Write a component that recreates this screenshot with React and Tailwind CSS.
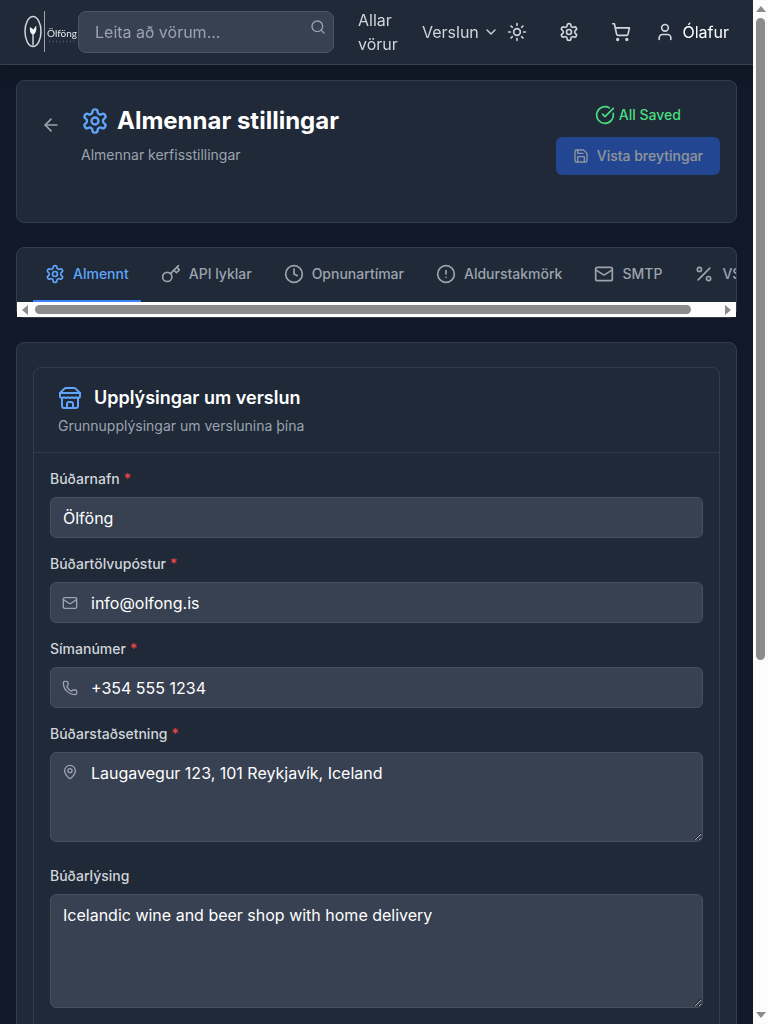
import React from "react";
import {
  ArrowLeft,
  ChevronDown,
  CircleAlert,
  CircleCheckBig,
  Clock,
  Mail,
  MapPin,
  Percent,
  Phone,
  Save,
  Search,
  ShoppingCart,
  Sun,
  User,
} from "lucide-react";

function StrokeIcon({ size, className, children }) {
  return (
    <svg
      width={size}
      height={size}
      viewBox="0 0 24 24"
      fill="none"
      stroke="currentColor"
      strokeWidth="2"
      strokeLinecap="round"
      strokeLinejoin="round"
      aria-hidden="true"
      className={className}
    >
      {children}
    </svg>
  );
}

function GearIcon(props) {
  return (
    <StrokeIcon {...props}>
      <path d="M12.22 2h-.44a2 2 0 0 0-2 2v.18a2 2 0 0 1-1 1.73l-.43.25a2 2 0 0 1-2 0l-.15-.08a2 2 0 0 0-2.73.73l-.22.38a2 2 0 0 0 .73 2.73l.15.1a2 2 0 0 1 1 1.72v.51a2 2 0 0 1-1 1.74l-.15.09a2 2 0 0 0-.73 2.73l.22.38a2 2 0 0 0 2.73.73l.15-.08a2 2 0 0 1 2 0l.43.25a2 2 0 0 1 1 1.73V20a2 2 0 0 0 2 2h.44a2 2 0 0 0 2-2v-.18a2 2 0 0 1 1-1.73l.43-.25a2 2 0 0 1 2 0l.15.08a2 2 0 0 0 2.73-.73l.22-.39a2 2 0 0 0-.73-2.73l-.15-.08a2 2 0 0 1-1-1.74v-.5a2 2 0 0 1 1-1.74l.15-.09a2 2 0 0 0 .73-2.73l-.22-.38a2 2 0 0 0-2.73-.73l-.15.08a2 2 0 0 1-2 0l-.43-.25a2 2 0 0 1-1-1.73V4a2 2 0 0 0-2-2z" />
      <circle cx="12" cy="12" r="3" />
    </StrokeIcon>
  );
}

function KeyIcon(props) {
  return (
    <StrokeIcon {...props}>
      <circle cx="7.5" cy="15.5" r="5.5" />
      <path d="m21 2-9.6 9.6" />
      <path d="m15.5 7.5 3 3L22 7l-3-3" />
    </StrokeIcon>
  );
}

function StoreIcon(props) {
  return (
    <StrokeIcon {...props}>
      <path d="m2 7 4.41-4.41A2 2 0 0 1 7.83 2h8.34a2 2 0 0 1 1.42.59L22 7" />
      <path d="M4 12v8a2 2 0 0 0 2 2h12a2 2 0 0 0 2-2v-8" />
      <path d="M15 22v-4a2 2 0 0 0-2-2h-2a2 2 0 0 0-2 2v4" />
      <path d="M2 7h20" />
      <path d="M22 7v3a2 2 0 0 1-2 2a2.7 2.7 0 0 1-1.59-.63.7.7 0 0 0-.82 0A2.7 2.7 0 0 1 16 12a2.7 2.7 0 0 1-1.59-.63.7.7 0 0 0-.82 0A2.7 2.7 0 0 1 12 12a2.7 2.7 0 0 1-1.59-.63.7.7 0 0 0-.82 0A2.7 2.7 0 0 1 8 12a2.7 2.7 0 0 1-1.59-.63.7.7 0 0 0-.82 0A2.7 2.7 0 0 1 4 12a2 2 0 0 1-2-2V7" />
    </StrokeIcon>
  );
}

const tabs = [
  { label: "Almennt", icon: GearIcon, active: true },
  { label: "API lyklar", icon: KeyIcon },
  { label: "Opnunartímar", icon: Clock },
  { label: "Aldurstakmörk", icon: CircleAlert },
  { label: "SMTP", icon: Mail },
  { label: "VSK", icon: Percent },
];

const control =
  "block w-full rounded-md border border-[#464f5e] bg-[#374151] text-base text-white outline-none focus:border-[#3b82f6]";

function Logo() {
  return (
    <a href="#" aria-label="Ölföng" className="block shrink-0">
      <svg width="54" height="42" viewBox="0 0 54 42" fill="none">
        <ellipse cx="9" cy="20.5" rx="8" ry="15" stroke="#d1d5db" strokeWidth="1.5" />
        <path d="M6 16C5.4 20 6.6 23 9 23.6C11.6 23 12.8 19.5 12.2 14.5L9.4 18.5Z" fill="#f3f4f6" />
        <path d="M9 23V34.5" stroke="#d1d5db" strokeWidth="1.5" />
        <path d="M20.5 0V41" stroke="#9ca3af" strokeWidth="1" />
        <text
          x="23"
          y="26"
          fill="#e5e7eb"
          fontSize="10"
          fontFamily="'Liberation Sans Narrow', 'Lato', sans-serif"
        >
          Ölföng
        </text>
        <path d="M25 30.5H53" stroke="#4b5563" strokeWidth="2" strokeDasharray="1 2.5" />
      </svg>
    </a>
  );
}

function Header() {
  return (
    <header className="sticky top-0 z-10 flex items-center border-b border-[#374151] bg-[#1f2937] px-6 py-2 shadow-lg">
      <Logo />
      <div className="relative w-64 shrink-0">
        <input
          type="search"
          aria-label="Leita að vörum"
          placeholder="Leita að vörum..."
          className="block h-[42px] w-full rounded-lg border border-[#4b5563] bg-[#374151] px-4 text-base text-white outline-none placeholder:text-[#9ca3af]"
        />
        <Search size={16} className="absolute top-2 right-2 text-[#9ca3af]" />
      </div>
      <nav className="ml-6 flex items-center gap-6 text-base text-[#d1d5db]">
        <a href="#" className="w-10">Allar vörur</a>
        <button type="button" className="flex items-center gap-1">
          Verslun
          <ChevronDown size={16} />
        </button>
      </nav>
      <div className="ml-auto flex items-center text-[#d1d5db]">
        <button type="button" aria-label="Þema" className="mr-8"><Sun size={20} /></button>
        <button type="button" aria-label="Stillingar" className="mr-8"><GearIcon size={20} /></button>
        <button type="button" aria-label="Karfa" className="mr-6"><ShoppingCart size={20} /></button>
        <button type="button" className="flex items-center gap-2">
          <User size={20} />
          <span className="text-base text-white">Ólafur</span>
        </button>
      </div>
    </header>
  );
}

function PageHeading() {
  return (
    <section className="flex items-start justify-between rounded-lg border border-[#323d4c] bg-[#1f2937] px-4 pt-6 pb-[47px]">
      <div className="flex items-start">
        <button type="button" aria-label="Til baka" className="mr-3 p-2 pt-[10px] text-[#9ca3af]">
          <ArrowLeft size={20} />
        </button>
        <div>
          <h1 className="flex items-center gap-2 text-2xl font-bold text-white">
            <GearIcon size={28} className="text-[#60a5fa]" />
            Almennar stillingar
          </h1>
          <p className="mt-2 text-sm text-[#9ca3af]">Almennar kerfisstillingar</p>
        </div>
      </div>
      <div className="flex flex-col items-center gap-3">
        <div className="flex items-center gap-1 text-sm font-medium text-[#4ade80]">
          <CircleCheckBig size={20} />
          All Saved
        </div>
        <button
          type="button"
          disabled
          className="flex items-center gap-2 rounded-md border border-transparent bg-[#2563eb] px-4 py-2 text-sm font-medium text-white opacity-50"
        >
          <Save size={16} />
          Vista breytingar
        </button>
      </div>
    </section>
  );
}

function HorizontalScrollbar() {
  return (
    <div aria-hidden="true" className="flex h-[15px] items-center gap-[7px] bg-[#fcfcfc] px-[5px]">
      <div className="border-y-[5px] border-r-[6px] border-y-transparent border-r-[#8b8b8b]" />
      <div className="flex flex-1">
        <div className="h-[9px] w-[96%] rounded-full bg-[#8b8b8b]" />
      </div>
      <div className="border-y-[5px] border-l-[6px] border-y-transparent border-l-[#8b8b8b]" />
    </div>
  );
}

function VerticalScrollbar() {
  return (
    <div aria-hidden="true" className="flex w-[15px] shrink-0 flex-col items-center gap-[6px] bg-[#fcfcfc] py-[6px]">
      <div className="border-x-[5px] border-b-[6px] border-x-transparent border-b-[#8b8b8b]" />
      <div className="flex-1">
        <div className="h-[65%] w-[9px] rounded-full bg-[#8b8b8b]" />
      </div>
      <div className="border-x-[5px] border-t-[6px] border-x-transparent border-t-[#8b8b8b]" />
    </div>
  );
}

function TabBar() {
  return (
    <section className="mt-6 rounded-lg border border-[#323d4c] bg-[#1f2937]">
      <nav className="flex gap-2 overflow-x-auto px-4 [scrollbar-width:none]">
        {tabs.map(({ label, icon: Icon, active }) => (
          <button
            key={label}
            type="button"
            className={`flex shrink-0 items-center gap-2 border-b-2 px-3 py-4 text-sm font-medium ${
              active ? "border-[#3b82f6] text-[#60a5fa]" : "border-transparent text-[#9ca3af]"
            }`}
          >
            <Icon size={20} />
            {label}
          </button>
        ))}
      </nav>
      <HorizontalScrollbar />
    </section>
  );
}

function Field({ id, label, required, icon: Icon, iconTop, children }) {
  return (
    <div>
      <label htmlFor={id} className="mb-2 block text-sm font-medium text-[#d1d5db]">
        {label}
        {required && <span className="ml-1 text-[#ef4444]">*</span>}
      </label>
      <div className="relative">
        {Icon && (
          <Icon size={16} className={`absolute left-3 text-[#9ca3af] ${iconTop ? "top-3" : "top-[13px]"}`} />
        )}
        {children}
      </div>
    </div>
  );
}

function StoreForm() {
  return (
    <section className="mt-6 rounded-lg border border-[#323d4c] bg-[#1f2937] px-4 py-6">
      <div className="rounded-lg border border-[#323d4c]">
        <div className="border-b border-[#323d4c] px-6 py-4">
          <h2 className="flex items-center gap-3 text-lg font-semibold text-white">
            <StoreIcon size={24} className="text-[#60a5fa]" />
            Upplýsingar um verslun
          </h2>
          <p className="mt-1 text-sm text-[#9ca3af]">Grunnupplýsingar um verslunina þína</p>
        </div>
        <form className="flex flex-col gap-4 p-4">
          <Field id="store-name" label="Búðarnafn" required>
            <input id="store-name" defaultValue="Ölföng" className={`${control} h-[41px] px-3`} />
          </Field>
          <Field id="store-email" label="Búðartölvupóstur" required icon={Mail}>
            <input id="store-email" type="email" defaultValue="info@olfong.is" className={`${control} h-[41px] pr-3 pl-10`} />
          </Field>
          <Field id="store-phone" label="Símanúmer" required icon={Phone}>
            <input id="store-phone" type="tel" defaultValue="+354 555 1234" className={`${control} h-[41px] pr-3 pl-10`} />
          </Field>
          <Field id="store-address" label="Búðarstaðsetning" required icon={MapPin} iconTop>
            <textarea
              id="store-address"
              rows={3}
              defaultValue="Laugavegur 123, 101 Reykjavík, Iceland"
              className={`${control} mb-2 py-2 pr-3 pl-10`}
            />
          </Field>
          <Field id="store-description" label="Búðarlýsing">
            <textarea
              id="store-description"
              rows={4}
              defaultValue="Icelandic wine and beer shop with home delivery"
              className={`${control} mb-2 px-3 py-2`}
            />
          </Field>
        </form>
      </div>
    </section>
  );
}

export default function App() {
  return (
    <div className="flex h-screen bg-[#111827] font-['Inter',sans-serif]">
      <div className="min-w-0 flex-1 overflow-y-auto [scrollbar-width:none]">
        <Header />
        <main className="px-4 pt-[15px] pb-4">
          <PageHeading />
          <TabBar />
          <StoreForm />
        </main>
      </div>
      <VerticalScrollbar />
    </div>
  );
}
